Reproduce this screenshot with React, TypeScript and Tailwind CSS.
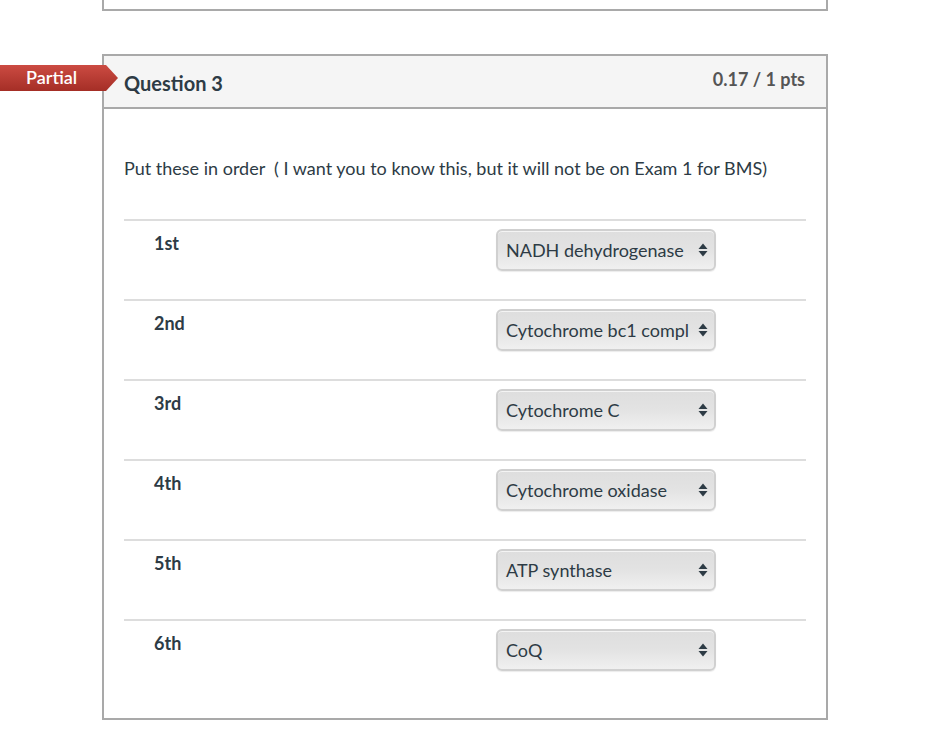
import React from "react";

interface Row {
  label: string;
  value: string;
}

const rows: Row[] = [
  { label: "1st", value: "NADH dehydrogenase" },
  { label: "2nd", value: "Cytochrome bc1 compl" },
  { label: "3rd", value: "Cytochrome C" },
  { label: "4th", value: "Cytochrome oxidase" },
  { label: "5th", value: "ATP synthase" },
  { label: "6th", value: "CoQ" },
];

const SelectBox: React.FC<{ value: string }> = ({ value }) => {
  return (
    <div className="relative flex h-[42px] w-[220px] items-center rounded-[6px] border-2 border-[#d0d0d0] bg-linear-to-b from-[#dedede] via-[#e3e3e3] to-[#f0f0f0] pl-[8px] text-[18px] text-[#2d3b45] shadow-[inset_0_1px_0_#f4f4f4,0_1px_1px_rgba(0,0,0,0.08)]">
      <span className="whitespace-nowrap">{value}</span>
      <svg
        className="absolute right-[6px] top-1/2 -translate-y-1/2"
        width="10"
        height="16"
        viewBox="0 0 10 16"
      >
        <path d="M5 1.5 L9.5 7 L0.5 7 Z" fill="#2d3b45" />
        <path d="M5 14.5 L9.5 9 L0.5 9 Z" fill="#2d3b45" />
      </svg>
    </div>
  );
};

const App: React.FC = () => {
  return (
    <div className="min-h-[750px] w-[938px] bg-white font-['Lato','Liberation_Sans',sans-serif] text-[#2d3b45]">
      {/* bottom of previous question */}
      <div className="ml-[102px] h-[11px] w-[726px] border-2 border-t-0 border-[#a9a9a9]" />

      <div className="relative ml-[102px] mt-[43px] w-[726px] border-2 border-[#a9a9a9]">
        {/* partial badge */}
        <div className="absolute left-[-104px] top-[9px] h-[26px] w-[120px] bg-linear-to-b from-[#cc4b42] to-[#a52e26] [clip-path:polygon(0_0,106px_0,118px_50%,106px_100%,0_100%)]">
          <span className="absolute left-[26px] top-[1px] text-[18px] font-semibold leading-[22px] text-white">
            Partial
          </span>
        </div>

        <div className="flex h-[53px] justify-between border-b-2 border-[#a9a9a9] bg-[#f5f5f5] pl-[20px] pr-[21px]">
          <h2 className="pt-[14px] text-[20px] font-bold leading-[26px]">Question 3</h2>
          <div className="pt-[11px] text-[18px] font-bold leading-[24px] text-[#555]">
            0.17 / 1 pts
          </div>
        </div>

        <div className="px-[20px] pb-[19px] pt-[46px]">
          <p className="text-[18px] leading-[26px]">
            Put these in order&nbsp; ( I want you to know this, but it will not be on Exam 1 for BMS)
          </p>

          <div className="mt-[38px] w-[682px]">
            {rows.map((row) => (
              <div key={row.label} className="flex h-[80px] border-t-2 border-[#dddddd]">
                <div className="w-[372px] pl-[30px] pt-[10px] text-[18px] font-bold leading-[24px]">
                  {row.label}
                </div>
                <div className="pt-[8px]">
                  <SelectBox value={row.value} />
                </div>
              </div>
            ))}
          </div>
        </div>
      </div>
    </div>
  );
};

export default App;
